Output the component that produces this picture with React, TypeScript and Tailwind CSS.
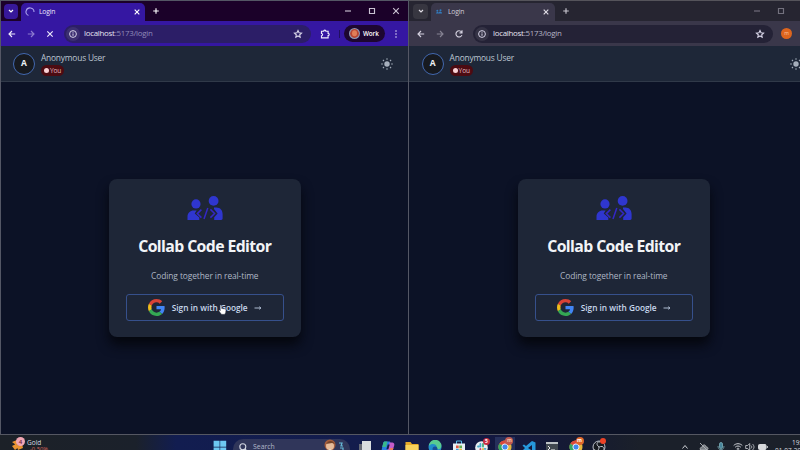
import React from "react";

const ui = "font-['Open_Sans','Noto_Sans',sans-serif]";

type P = { className?: string };

const Stroke = ({ d, className = "" }: P & { d: string }) => (
  <svg viewBox="0 0 12 12" className={`h-3 w-3 shrink-0 ${className}`} fill="none" stroke="currentColor" strokeWidth="1.15">
    <path d={d} />
  </svg>
);

const BACK = "M9.2 6H3M6 3 3 6l3 3";
const FORWARD = "M2.8 6H9M6 3l3 3-3 3";
const CROSS = "M3.7 3.7l4.6 4.6M8.3 3.7 3.7 8.3";
const STOP = "M3.3 3.3l5.4 5.4M8.7 3.3 3.3 8.7";
const PLUS = "M6 3.2v5.6M3.2 6h5.6";
const CHEVRON = "M4 5l2 2 2-2";
const RELOAD = "M8.9 7.1A3.1 3.1 0 1 1 8.5 4M9 2.3v2.5H6.5";
const STAR = "M6 2.5l1.05 2.25 2.45.3-1.8 1.7.45 2.45L6 8 3.85 9.2l.45-2.45-1.8-1.7 2.45-.3z";
const PUZZLE = "M2.5 3.2h2.2a1.1 1.1 0 0 1 2.2 0h2.2v2.2a1.1 1.1 0 0 1 0 2.2v2.3H2.5V7.7a1.1 1.1 0 0 0 0-2.2z";

const Sun = ({ className = "" }: P) => (
  <svg viewBox="0 0 12 12" className={`h-3 w-3 shrink-0 text-[#a6afbc] ${className}`} stroke="currentColor" strokeWidth="1.1">
    <circle cx="6" cy="6" r="2.7" fill="currentColor" stroke="none" />
    <path d="M6 .2v1.6M6 10.2v1.6M.2 6h1.6M10.2 6h1.6M1.9 1.9l1.1 1.1M9 9l1.1 1.1M1.9 10.1 3 9M9 3l1.1-1.1" />
  </svg>
);

const Info = () => (
  <svg viewBox="0 0 14 14" className="h-3.5 w-3.5 shrink-0">
    <circle cx="7" cy="7" r="7" fill="#ffffff" fillOpacity=".08" />
    <circle cx="7" cy="7" r="3.4" fill="none" stroke="#d5d2e6" strokeWidth="1" />
    <path d="M7 6.4v2.4M7 4.8v.9" stroke="#d5d2e6" />
  </svg>
);

const CollabLogo = ({ className = "" }: P) => (
  <svg viewBox="0 0 36 26" className={`h-[26px] w-9 ${className}`} fill="#2f36cf">
    <circle cx="9" cy="8.9" r="4.6" />
    <circle cx="26.6" cy="5.9" r="4.9" />
    <path d="M.5 25v-3.2c0-3.8 2.8-6.2 6.1-6.2h3L7.7 18.5l4.6 4V25z" />
    <path d="M27 12.6h2.4c3.9 0 6.2 2.9 6.2 6.5v4.5c0 .9-.6 1.4-1.4 1.4h-7v-2.7l3.4-3.8-3.6-4.6z" />
    <path d="M14.4 14.6l-4.1 4 4.1 4M20.8 13l-3.8 11M23.4 14.4l4.2 4.1-4.2 4.1" fill="none" stroke="#3327c6" strokeWidth="1.5" />
  </svg>
);

const GoogleG = () => (
  <svg viewBox="0 0 48 48" className="h-[17px] w-[17px] shrink-0">
    <path fill="#d94235" d="M24 9.5c3.54 0 6.71 1.22 9.21 3.6l6.85-6.85C35.9 2.38 30.47 0 24 0 14.62 0 6.51 5.38 2.56 13.22l7.98 6.19C12.43 13.72 17.74 9.5 24 9.5z" />
    <path fill="#4285f4" d="M46.98 24.55c0-1.57-.15-3.09-.38-4.55H24v9.02h12.94c-.58 2.96-2.26 5.48-4.78 7.18l7.73 6c4.51-4.18 7.09-10.36 7.09-17.65z" />
    <path fill="#f0bd1c" d="M10.53 28.59A14.4 14.4 0 0 1 9.77 24c0-1.6.27-3.14.76-4.59l-7.98-6.19A23.9 23.9 0 0 0 0 24c0 3.88.92 7.54 2.56 10.78z" />
    <path fill="#34a853" d="M24 48c6.48 0 11.93-2.13 15.89-5.81l-7.73-6c-2.15 1.45-4.92 2.3-8.16 2.3-6.26 0-11.57-4.22-13.47-9.91l-7.98 6.19C6.51 42.62 14.62 48 24 48z" />
  </svg>
);

const Hand = ({ className = "" }: P) => (
  <svg viewBox="0 0 10 13" className={`h-[11px] w-[9px] ${className}`} fill="#fff" stroke="#454d5b" strokeWidth=".5">
    <path d="M2.3 1.3c.8-.5 1.5 0 1.5.8v3.1l4 .8c.9.2 1.3.8 1.2 1.6l-.4 2.7-1 1.9H3.8L.9 8.4c-.5-.8.4-1.5 1.1-1l.5.6z" />
  </svg>
);

function AppHeader({ right = false }: { right?: boolean }) {
  return (
    <header className="flex h-9 shrink-0 items-center border-b border-[#303949] bg-[#1e2738] pl-3">
      <div className={`flex h-[22px] w-[22px] shrink-0 items-center justify-center rounded-full border border-[#4268af] bg-[#171a20] text-[8.5px] font-bold text-[#edf0f4] ${right ? "ml-[0.6px]" : ""}`}>A</div>
      <div className="ml-1.5 flex flex-col items-start">
        <span className="h-[14px] text-[8.4px] leading-[14px] tracking-[-0.2px] whitespace-nowrap text-[#bdc6d2]">Anonymous User</span>
        <span className="flex h-[11px] w-[23px] items-center rounded-full bg-[#4c0b12] pl-[3px] text-[6.5px] leading-[11px] tracking-[-0.1px] text-[#e2bcc0]">
          <i className="mr-px h-[5px] w-[5px] rounded-full bg-[#fad1d5]" />You
        </span>
      </div>
      <Sun className={right ? "-mr-[2px] ml-auto" : "mr-[15px] ml-auto"} />
    </header>
  );
}

function LoginCard({ pointer = false }: { pointer?: boolean }) {
  return (
    <section className="flex h-[158px] w-[191.5px] flex-col items-center rounded-[8px] bg-[#1e2637] shadow-[0_8px_12px_#05070e]">
      <CollabLogo className="mt-[16px]" />
      <h1 className="mt-[12px] h-[27px] text-[15.8px] leading-[27px] font-bold tracking-[-0.6px] whitespace-nowrap text-[#f2f4f7]">Collab Code Editor</h1>
      <p className="mt-[9px] h-[14px] text-[8.4px] leading-[14px] tracking-[-0.08px] whitespace-nowrap text-[#aeb7c5]">Coding together in real-time</p>
      <button className="relative mt-[11px] flex h-[27px] w-[158px] items-center rounded-[3px] border border-[#36508c] pl-[21px] text-left">
        <GoogleG />
        <span className="mt-px ml-[7px] w-[77px] text-[8.3px] font-semibold tracking-[-0.02px] whitespace-nowrap text-[#c8d8ed]">Sign in with Google</span>
        <svg viewBox="0 0 8 6" className="mt-px ml-[5px] h-1.5 w-2" stroke="#bdcce1" fill="none" strokeWidth=".9"><path d="M.5 3h6.3M5.3 1.7 6.9 3 5.3 4.3" /></svg>
        {pointer && <Hand className="absolute top-[8.5px] left-[91.5px]" />}
      </button>
    </section>
  );
}

const Address = ({ right = false }: { right?: boolean }) => (
  <div className={`flex h-[18px] shrink-0 items-center rounded-full pl-0.5 ${right ? "ml-[8px] w-[300px] bg-[#242236]" : "ml-[8px] w-[247px] bg-[#2c1e67]"}`}>
    <Info />
    <span className="mt-px ml-1 text-[7.9px] tracking-[-0.27px] whitespace-nowrap text-[#e6e3f1]">localhost<span className={right ? "text-[#b5b3c4]" : "text-[#9089b9]"}>:5173/login</span></span>
    <Stroke d={STAR} className="mr-[7px] ml-auto text-[#d8d5e8]" />
  </div>
);

function LeftWindow() {
  return (
    <div className="flex h-[434px] w-[409px] flex-col overflow-hidden border-t border-r border-l border-[#545765] bg-[#0c1226]">
      <div className="flex h-5 shrink-0 items-center bg-[#1b0129] text-[#c9c2d2]">
        <div className="ml-[3px] flex h-[15px] w-[14px] items-center justify-center rounded-[4px] bg-[#37189a] text-white"><Stroke d={CHEVRON} /></div>
        <div className="ml-[3px] flex h-[18px] w-[124px] items-center self-end rounded-t-[5px] bg-[#3517a2] pb-px">
          <svg viewBox="0 0 10 10" className="ml-[4px] h-2.5 w-2.5" fill="none" stroke="#aaa0ed" strokeWidth="1.1"><path d="M3.4 8.6A4 4 0 1 1 9 5" /></svg>
          <span className="mt-px ml-[4px] text-[6.8px] tracking-[-0.2px] text-[#eae5fb]">Login</span>
          <Stroke d={CROSS} className="mr-[2px] ml-auto text-white" />
        </div>
        <Stroke d={PLUS} className="ml-[5px] text-white" />
        <div className="mr-[6px] ml-auto flex gap-[12px]">
          <Stroke d="M3 6h6" /><Stroke d="M3.5 3.5h5v5h-5z" /><Stroke d="M3.2 3.2l5.6 5.6M8.8 3.2 3.2 8.8" />
        </div>
      </div>
      <div className="flex h-[25px] shrink-0 items-center bg-[#3517a2] pl-[5px] text-[#eeebfc]">
        <Stroke d={BACK} /><Stroke d={FORWARD} className="ml-[7px] text-[#8d7bd0]" /><Stroke d={STOP} className="ml-[7px]" />
        <Address />
        <Stroke d={PUZZLE} className="ml-[8px]" />
        <i className="ml-[8px] h-2 w-px bg-[#21105f]" />
        <div className="ml-[4px] flex h-[17px] w-[41px] items-center rounded-full bg-[#1d0730] pl-[5px]">
          <svg viewBox="0 0 11 11" className="h-[11px] w-[11px]"><circle cx="5.5" cy="5.5" r="5.5" fill="#8d98b5" /><circle cx="5.5" cy="5.5" r="4.4" fill="#b84632" /><ellipse cx="5.5" cy="5.2" rx="2.5" ry="3" fill="#e07e58" /></svg>
          <span className="ml-[3px] text-[6.3px] font-semibold tracking-[-0.1px] text-white">Work</span>
        </div>
        <svg viewBox="0 0 4 10" className="ml-[9px] h-2.5 w-1" fill="currentColor"><circle cx="2" cy="2" r=".75" /><circle cx="2" cy="5" r=".75" /><circle cx="2" cy="8" r=".75" /></svg>
      </div>
      <AppHeader />
      <main className="flex flex-1 items-start pt-[97px] pl-[108px]"><LoginCard pointer /></main>
    </div>
  );
}

function RightWindow() {
  return (
    <div className="flex h-[434px] w-[391px] flex-col overflow-hidden border-t border-[#55545b] bg-[#0c1226]">
      <div className="flex h-5 shrink-0 items-center bg-[#262531] text-[#73717e]">
        <div className="ml-1 flex h-[15px] w-[15px] items-center justify-center rounded-[4px] bg-[#373640] text-[#dedbe3]"><Stroke d={CHEVRON} /></div>
        <div className="ml-[3px] flex h-[18px] w-[124px] items-center self-end rounded-t-[5px] bg-[#3a374a] pb-px">
          <svg viewBox="0 0 36 26" className="ml-[5px] h-[5px] w-[6px]" fill="#327bbd"><circle cx="8" cy="8" r="6" /><circle cx="27" cy="5" r="6" /><path d="M0 25c0-12 15-12 17-4 2-12 19-9 19 4z" /></svg>
          <span className="mt-px ml-[6px] text-[6.8px] tracking-[-0.2px] text-[#d0cdd8]">Login</span>
          <Stroke d={CROSS} className="mr-[3px] ml-auto text-[#dedbe4]" />
        </div>
        <Stroke d={PLUS} className="ml-[5px] text-[#c9c7d0]" />
        <div className="mr-[13px] ml-auto flex gap-[12px]"><Stroke d="M3 6h6" /><Stroke d="M3.5 3.5h5v5h-5z" /></div>
      </div>
      <div className="flex h-[25px] shrink-0 items-center bg-[#3a374a] pl-[6px] text-[#d4d1df]">
        <Stroke d={BACK} /><Stroke d={FORWARD} className="ml-[7px] text-[#868393]" /><Stroke d={RELOAD} className="ml-[7px]" />
        <Address right />
        <div className="ml-[8px] flex h-[11px] w-[11px] items-center justify-center rounded-full bg-[#dd651e] text-[5px] text-[#ffc5a0]">m</div>
      </div>
      <AppHeader right />
      <main className="flex flex-1 items-start pt-[97px] pl-[109px]"><LoginCard /></main>
    </div>
  );
}

const Chrome = () => (
  <svg viewBox="0 0 14 14" className="h-3.5 w-3.5"><circle cx="7" cy="7" r="6.5" fill="#e5b83d" /><path d="M7 7 1.3 3.8A6.5 6.5 0 0 1 12.8 4z" fill="#dc493b" /><path d="M7 7 1.3 3.8A6.5 6.5 0 0 0 7 13.5z" fill="#34a763" /><circle cx="7" cy="7" r="3.1" fill="#4189ed" stroke="#e9f1fb" /></svg>
);

function TaskIcon({ kind }: { kind: string }) {
  const shapes: Record<string, React.ReactNode> = {
    windows: <path d="M.6.8h6v6h-6zM7.2.8h6v6h-6zM.6 7.4h6v6h-6zM7.2 7.4h6v6h-6z" fill="#6dc7f2" />,
    tasks: <><path d="M1 4h9v9H1z" fill="#656974" /><path d="M4 1h9v9H4z" fill="#dadddf" /></>,
    copilot: <><path d="M3.5 1.5h4.6c1 0 1.4.8 1.2 1.6L7.6 9c-.4 1.6-1.2 2.5-2.6 2.5H2.6C1 11.500.4 10 .9 8.500L2 4c.3-1.400.7-2.500 1.500-2.500z" fill="#2a7fe0" /><path d="M3.500 1.500h3L5 7H1.200L2 4c.3-1.400.7-2.500 1.500-2.500z" fill="#39b98a" /><path d="M8.500 2.500h2.800c1.700 0 2.300 1.500 1.900 3L12 9.500c-.4 1.800-1.200 3-2.500 3H6z" fill="#c45ccb" /><path d="M9 8h3.400l-.4 1.500c-.4 1.800-1.200 3-2.500 3H7.500z" fill="#e9775b" /><path d="M6.700 4.500h2l-1.300 4.800h-2z" fill="#141d4c" /></>,
    folder: <><path d="M.5 2h5l1.5 2h6.5v9H.5z" fill="#e6a928" /><path d="M.5 5h13v8H.5z" fill="#f8d25b" /></>,
    edge: <><circle cx="7" cy="7" r="6.5" fill="#218dcb" /><path d="M1 6a6.2 6.2 0 0 1 12.4 0c0 3-3 4-5.4 2.8C11 5 4 2 1 6z" fill="#58cb91" /><circle cx="7" cy="9" r="2.5" fill="#174f98" /></>,
    store: <><path d="M4.5 4V1h5v3" fill="none" stroke="#5ab9e7" /><path d="M1 3.5h12V13H1z" fill="#e9eef3" /><path d="M4 5.5h2.7v2.7H4z" fill="#e05842" /><path d="M7.3 5.5H10v2.7H7.3z" fill="#63ae50" /><path d="M4 8.8h2.7v2.5H4z" fill="#399ce1" /><path d="M7.3 8.8H10v2.5H7.3z" fill="#eab63e" /></>,
    slack: <><circle cx="6.5" cy="7.5" r="6.3" fill="#e9eef2" /><g strokeWidth="1.8" strokeLinecap="round"><path d="M5.400 4v2.500" stroke="#3fa9d0" /><path d="M8 4v2.500" stroke="#3fae7c" /><path d="M3 6.500h1M9.500 8.800h1" stroke="#4aa9c9" /><path d="M5.400 9v2" stroke="#cf3f68" /><path d="M8 9v2" stroke="#e6b13e" /></g></>,
    code: <path d="M10 1 4 6 2 4.5.5 5.5 3 8 .5 10.5 2 11.5 4 10l6 4 3.5-1.7V2.5zM10 5v5.5L6 8z" fill="#2698dc" fillRule="evenodd" />,
    terminal: <><path d="M1 2h12v11H1z" fill="#414850" /><path d="M1 2h12v2H1z" fill="#bcc1c5" /><path d="m3 6 2 2-2 2M6 10h4" fill="none" stroke="#f0f0f1" /></>,
    obs: <><circle cx="7" cy="7" r="6" fill="#171a20" stroke="#babec8" /><path d="M7 7c-4-3-1-6 1-5M7 7c5-2 6 2 4 4M7 7c0 5-4 4-5 2" fill="none" stroke="#babec8" /></>,
  };
  return kind === "chrome" ? <Chrome /> : <svg viewBox="0 0 14 14" className="h-3.5 w-3.5">{shapes[kind]}</svg>;
}

function Taskbar() {
  const icons = ["tasks", "copilot", "folder", "edge", "store", "slack", "chrome", "code", "terminal", "chrome", "obs"];
  return (
    <footer className="flex h-4 items-start overflow-hidden border-t border-[#555762] bg-[linear-gradient(90deg,#1c2128_0%,#1b212b_17%,#121d50_22%,#131c4c_45%,#131840_62%,#161b30_74%,#1b202a_80%)]">
      <div className="flex w-[213px] pt-[3px] pl-[11px]">
        <div className="relative h-3 w-[14px]">
          <svg viewBox="0 0 14 12" className="h-3 w-3.5" fill="#e99332"><path d="m1 4 5-2 4 3-5 2zM1 8l4-2 4 2-5 4zM6 8l5-2 1 4-5 2z" /></svg>
          <b className="absolute -top-px left-[5px] flex h-[9px] w-[9px] items-center justify-center rounded-full bg-[#f1a6b4] text-[6px] leading-none font-semibold text-[#722033]">4</b>
        </div>
        <div className="ml-[2px] text-[6.5px] leading-[9px] text-[#d8dce2]">Gold<div className="-mt-[2px] pl-[3px] text-[5.8px] text-[#d8645a]">-0.50%</div></div>
      </div>
      <div className="pt-[5px]"><TaskIcon kind="windows" /></div>
      <div className="mt-[4px] ml-[6px] flex h-[20px] w-[117px] items-start rounded-full bg-[#30365a] pt-[3px] pl-[6px]">
        <svg viewBox="0 0 9 9" className="mt-px h-[9px] w-[9px]" fill="none" stroke="#d4d8e3" strokeWidth="1.1"><circle cx="3.8" cy="3.8" r="3" /><path d="m6 6 2.5 2.5" /></svg>
        <span className="-mt-px ml-[5px] text-[6.9px] leading-[12px] text-[#b1b7c8]">Search</span>
        <svg viewBox="0 0 22 14" className="-mt-[3px] mr-[4px] ml-auto h-3.5 w-[22px]"><circle cx="6" cy="6" r="5.5" fill="#a65e3c" /><circle cx="6" cy="7" r="4" fill="#e6bc9b" /><path d="M3 14c1-5 5-5 6 0z" fill="#e5e7df" /><path d="M2 5c2-4 7-4 9 0L8 4z" fill="#754329" /><path d="M15 4h3l-1 3h2M16 9h3v3h-3" fill="none" stroke="#66b9d8" strokeWidth="1.2" /></svg>
      </div>
      <div className="ml-[8px] flex gap-[9.4px] pt-[5px]">
        {icons.map((kind, i) => (
          <div key={i} className={`relative h-3.5 w-3.5 ${i === 6 ? "bg-[#26305b] shadow-[0_0_0_3px_#26305b]" : ""}`}>
            <TaskIcon kind={kind} />
            {i === 5 && <b className="absolute -top-[2px] left-[8px] flex h-[7px] w-[7px] items-center justify-center rounded-full bg-[#c52d42] text-[5px] text-white">5</b>}
            {i === 6 && <b className="absolute -top-[3px] left-[7px] flex h-[8px] w-[8px] items-center justify-center rounded-full bg-[#c35b51] text-[5px] text-[#edc3ac]">m</b>}
            {i === 9 && <b className="absolute -top-[3px] left-[7px] flex h-[8px] w-[8px] items-center justify-center rounded-full bg-[#df682c] text-[5px] text-white">m</b>}
            {i === 10 && <i className="absolute -top-[2px] left-[8px] h-[6px] w-[6px] rounded-full bg-[#ec4227]" />}
          </div>
        ))}
      </div>
      <div className="mr-[7px] ml-auto flex items-start pt-[7px] text-[#cfd2d7]">
        <svg viewBox="0 0 8 8" className="mt-px h-2 w-2" fill="none" stroke="currentColor"><path d="m1.5 5.5 2.500-3 2.500 3" /></svg>
        <svg viewBox="0 0 10 10" className="ml-[10px] h-2.5 w-2.5" fill="#777c82" stroke="#a8abb0"><path d="M1.500 8c-1-2 .5-3 1.700-2.800C4 1.500 7 3 7.100 5c3 0 2 3 .5 3zM1 1l8 8" /></svg>
        <svg viewBox="0 0 8 10" className="ml-[8px] h-2.5 w-2" fill="#47859a" stroke="#7badb8" strokeWidth=".8"><rect x="2.5" y=".5" width="3" height="6" rx="1.5" /><path d="M1 4c0 5 6 5 6 0M4 8v2" fill="none" /></svg>
        <svg viewBox="0 0 10 10" className="ml-[8px] h-2.5 w-2.5" fill="none" stroke="currentColor"><path d="M.7 3.5c2.400-2.400 6.200-2.400 8.600 0M2.200 5.200c1.600-1.600 4-1.600 5.600 0M3.700 6.800c.7-.7 1.900-.7 2.600 0" /><circle cx="5" cy="8" r=".5" /></svg>
        <svg viewBox="0 0 10 10" className="ml-[2px] h-2.5 w-2.5" fill="none" stroke="currentColor" strokeWidth=".8"><path d="M.7 3.500h2l2-2v7l-2-2h-2zM6 3.500c1 1 1 2 0 3M7.500 2c2 2 2 4 0 6" /></svg>
        <svg viewBox="0 0 10 8" className="mt-px ml-[3px] h-2 w-2.5" fill="#d7d9dc" stroke="#d7d9dc"><rect x=".5" y="1.5" width="7.5" height="5" rx="1" /><path d="M9.300 3v2" /></svg>
      </div>
      <div className="w-[25px] overflow-hidden pt-[4px] text-[6.4px] leading-[8px] whitespace-nowrap text-[#d8dadd]"><div className="pl-[17px]">19:21</div><div>01-07-2025</div></div>
    </footer>
  );
}

export default function App() {
  return (
    <div className={`h-[450px] w-[800px] overflow-hidden bg-[#0c1226] ${ui}`}>
      <div className="flex"><LeftWindow /><RightWindow /></div>
      <Taskbar />
    </div>
  );
}
